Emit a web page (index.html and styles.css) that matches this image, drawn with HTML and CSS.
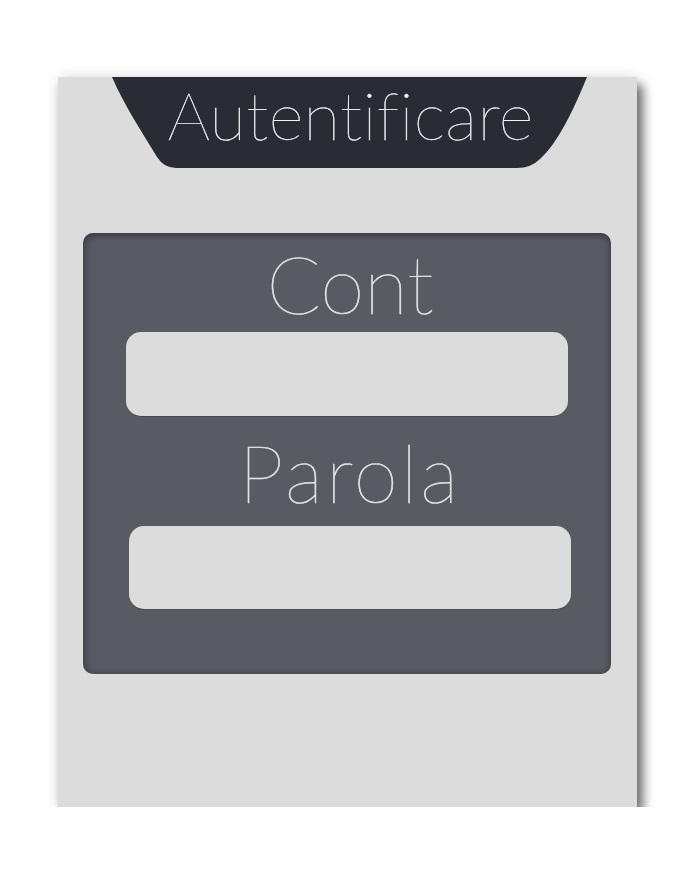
FILE: index.html
```html
<!DOCTYPE html>
<html lang="ro">
<head>
<meta charset="utf-8">
<title>Autentificare</title>
<link rel="stylesheet" href="styles.css">
</head>
<body>
<div class="page">
  <div class="card">
    <div class="banner">
      <svg class="banner-bg" viewBox="0 0 475 91" preserveAspectRatio="none" aria-hidden="true">
        <path d="M0,0 H475 C462,32 446,66 428,82 Q419,91 405,91 H64 Q52,91 45,80 C30,55 12,28 0,0 Z" fill="#2a2c35"/>
      </svg>
      <h1 class="title">Autentificare</h1>
    </div>
    <form class="panel">
      <label class="label" for="cont">Cont</label>
      <input class="field field-1" id="cont" type="text">
      <label class="label label-2" for="parola">Parola</label>
      <input class="field field-2" id="parola" type="password">
    </form>
  </div>
</div>
</body>
</html>
```

FILE: styles.css
```css
html, body {
  margin: 0;
  padding: 0;
  background: #ffffff;
}

.page {
  padding: 77px 0 0 58px;
}

.card {
  width: 579px;
  height: 730px;
  background: #dcdcdc;
  box-shadow: 6px 8px 10px rgba(0, 0, 0, 0.55), 0 0 14px rgba(0, 0, 0, 0.12);
  display: flex;
  flex-direction: column;
  align-items: flex-start;
}

.banner {
  position: relative;
  width: 475px;
  height: 91px;
  margin-left: 54px;
}

.banner-bg {
  position: absolute;
  inset: 0;
  width: 100%;
  height: 100%;
  display: block;
}

.title {
  position: relative;
  margin: 0 0 0 2px;
  padding-top: 4px;
  text-align: center;
  font-family: "Lato", "DejaVu Sans", sans-serif;
  font-weight: 200;
  font-size: 67px;
  line-height: 67px;
  letter-spacing: 0.4px;
  color: #f2f2f2;
  -webkit-text-stroke: 0.4px #f2f2f2;
}

.panel {
  margin: 65px 0 0 25px;
  width: 528px;
  height: 441px;
  box-sizing: border-box;
  padding-top: 10px;
  border-radius: 10px;
  background: #595b63;
  box-shadow: inset 0 3px 6px rgba(0, 0, 0, 0.25), inset 5px 0 8px rgba(0, 0, 0, 0.12), inset -3px 0 6px rgba(0, 0, 0, 0.1);
  display: flex;
  flex-direction: column;
  align-items: flex-start;
}

.label {
  align-self: stretch;
  text-align: center;
  font-family: "Lato", "DejaVu Sans", sans-serif;
  font-weight: 200;
  font-size: 80px;
  line-height: 80px;
  color: #e4e4e4;
  -webkit-text-stroke: 0.6px #e4e4e4;
  margin-left: 6px;
}

.label-2 {
  margin-top: 16px;
  letter-spacing: 3px;
}

.field {
  display: block;
  width: 442px;
  height: 84px;
  box-sizing: border-box;
  border: none;
  border-radius: 15px;
  background: #dcdcdc;
  box-shadow: 0 1px 0 rgba(0, 0, 0, 0.18);
  outline: none;
  padding: 0 16px;
  font-family: "Lato", sans-serif;
  font-size: 24px;
}

.field-1 {
  margin: 9px 0 0 43px;
}

.field-2 {
  margin: 14px 0 0 46px;
  height: 83px;
}
```
